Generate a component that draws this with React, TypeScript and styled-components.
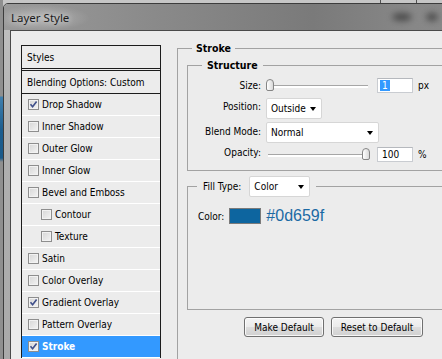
import React from "react";
import styled, { createGlobalStyle } from "styled-components";

const UI_FONT = `"DejaVu Sans Condensed", "Liberation Sans", Arial, sans-serif`;

const GlobalStyle = createGlobalStyle`
  html, body { margin: 0; padding: 0; width: 442px; height: 359px; overflow: hidden; }
  body { background: #c4c4c4; font-family: ${UI_FONT}; font-size: 10px; line-height: 13px; color: #000; }
  #root { width: 442px; height: 359px; }
`;

const Desktop = styled.div`
  width: 442px;
  height: 359px;
  overflow: hidden;
  box-sizing: border-box;
  padding: 3px 0 0 3px;
  background:
    linear-gradient(90deg, transparent 380px, #505050 380px, #505050 381px, transparent 381px, transparent 416px, #505050 416px, #505050 417px, transparent 417px) left top / 100% 3px no-repeat,
    linear-gradient(180deg, #8f8f8f 0, #8f8f8f 96px, #3f7fae 97px, #1b5d8f 130px, #1a5a8a 158px, #8f8f8f 162px, #8f8f8f 100%) left top / 3px 100% no-repeat,
    #c6c6c6;
`;

const Window = styled.div`
  width: 500px;
  height: 420px;
  box-sizing: border-box;
  border: 1px solid #3c3c3c;
  border-radius: 5px 5px 0 0;
  background: linear-gradient(180deg, #c2c2c2 0, #b0b0b0 120px, #a8a8a8 100%);
  display: flex;
  flex-direction: column;
  padding: 0 6px;
`;

const TitleBar = styled.div`
  height: 26px;
  margin: 0 -6px;
  padding-left: 7px;
  display: flex;
  align-items: center;
  border-radius: 4px 4px 0 0;
  background:
    radial-gradient(ellipse 48px 13px at 38px 14px, rgba(255, 255, 255, 0.3), rgba(255, 255, 255, 0) 100%),
    linear-gradient(90deg, #9a9a9a 0, #8a8a8a 30%, #7a7a7a 62%, #878787 82%, #8a8a8a 100%);
`;

const Title = styled.span`
  flex: 0 0 381px;
  font-family: "Noto Sans", "Liberation Sans", sans-serif;
  font-size: 11.5px;
  color: #1c1c1c;
  text-shadow: 0 0 6px rgba(255, 255, 255, 0.8);
`;

const Blob = styled.span<{ $w: number }>`
  width: ${(p) => p.$w}px;
  height: 8px;
  border-radius: 50%;
  background: #3d3d3d;
  filter: blur(3px);
  opacity: 0.8;
  margin-right: 14px;
`;

const Client = styled.div`
  flex: 1;
  border: 1px solid #4a4a4a;
  border-bottom: none;
  background: #ececec;
  display: flex;
  align-items: flex-start;
  padding-left: 10px;
`;

const StyleList = styled.div`
  width: 140px;
  flex: none;
  box-sizing: border-box;
  margin-top: 14px;
  border: 1px solid #1c1c1c;
  border-bottom: none;
`;

const ListHeader = styled.div`
  height: 22px;
  display: flex;
  align-items: center;
  padding-left: 5px;
  border-bottom: 3px double #1c1c1c;
`;

const BlendRow = styled.div`
  height: 22px;
  display: flex;
  align-items: center;
  padding-left: 5px;
  border-bottom: 1px solid #1c1c1c;
`;

const StyleRow = styled.div<{ $indent?: boolean; $selected?: boolean }>`
  height: 21px;
  border-bottom: 1px solid #ffffff;
  display: flex;
  align-items: center;
  gap: 3px;
  padding-left: ${(p) => (p.$indent ? 19 : 6)}px;
  background: ${(p) => (p.$selected ? "#3399ff" : "transparent")};
  color: ${(p) => (p.$selected ? "#ffffff" : "#000000")};
  font-weight: ${(p) => (p.$selected ? 700 : 400)};
`;

const CheckBox = styled.span`
  width: 11px;
  height: 11px;
  flex: none;
  box-sizing: border-box;
  border: 1px solid #8e8e8e;
  background: linear-gradient(135deg, #d6d6d6, #f4f4f4);
  box-shadow: inset 0 0 0 1px #f2f2f2;
  display: flex;
  align-items: center;
  justify-content: center;
`;

const RightColumn = styled.div`
  width: 300px;
  flex: none;
  margin-left: 16px;
  margin-top: 11px;
`;

const Group = styled.fieldset<{ $padLeft?: number }>`
  margin: 0;
  min-width: 0;
  padding: 0 0 0 ${(p) => p.$padLeft ?? 0}px;
  border: 1px solid #a2a2a2;
`;

const StrokeGroup = styled(Group)`
  border-bottom: none;
  padding-bottom: 40px;
`;

const InnerGroup = styled(Group)<{ $top: number }>`
  margin-top: ${(p) => p.$top}px;
`;

const Legend = styled.legend<{ $offset: number; $pad: number }>`
  margin-left: ${(p) => p.$offset}px;
  padding: 0 ${(p) => p.$pad}px;
  font-weight: 700;
  font-size: 10.5px;
  line-height: 13px;
`;

const FillLegend = styled.legend`
  margin-left: 9px;
  padding: 0 6px;
  display: flex;
  align-items: center;
  gap: 8px;
`;

const FieldGrid = styled.div`
  display: grid;
  grid-template-columns: 73px auto;
  column-gap: 5px;
  align-items: center;
  padding: 6px 0 8px;
`;

const Label = styled.span`
  text-align: right;
`;

const Controls = styled.div<{ $gapTop?: number }>`
  display: flex;
  align-items: center;
  margin-top: ${(p) => p.$gapTop ?? 0}px;
`;

const Slider = styled.div`
  position: relative;
  width: 104px;
  height: 15px;
  flex: none;
  margin-right: 7px;
`;

const Track = styled.div`
  position: absolute;
  left: 2px;
  right: 2px;
  top: 7px;
  height: 2px;
  background: #ffffff;
  border-top: 1px solid #a6a6a6;
`;

const Thumb = styled.div<{ $pos: number }>`
  position: absolute;
  top: 1px;
  left: ${(p) => p.$pos * 96}px;
  width: 8px;
  height: 12px;
  box-sizing: border-box;
  border: 1px solid #858585;
  border-radius: 4px 4px 2px 2px;
  background: linear-gradient(90deg, #ffffff, #d9d9d9);
`;

const NumField = styled.div`
  width: 36px;
  height: 15px;
  box-sizing: border-box;
  border: 1px solid #c9ccd1;
  border-top-color: #b5b8bd;
  background: #ffffff;
  display: flex;
  align-items: center;
  padding-left: 2px;
  margin-right: 5px;
`;

const FieldText = styled.span<{ $selected?: boolean }>`
  padding: 0 2px;
  line-height: 11px;
  background: ${(p) => (p.$selected ? "#3399ff" : "transparent")};
  color: ${(p) => (p.$selected ? "#ffffff" : "#000000")};
`;

const Select = styled.div<{ $w: number }>`
  width: ${(p) => p.$w}px;
  height: 21px;
  box-sizing: border-box;
  border: 1px solid #d6d6d6;
  border-radius: 2px;
  background: #ffffff;
  display: flex;
  align-items: center;
  justify-content: space-between;
  padding: 0 5px 0 4px;
  font-weight: 400;
`;

const Arrow = styled.span`
  width: 0;
  height: 0;
  border-left: 3.5px solid transparent;
  border-right: 3.5px solid transparent;
  border-top: 4px solid #000000;
`;

const ColorRow = styled.div`
  display: flex;
  align-items: center;
  padding: 10px 0 84px 10px;
`;

const Swatch = styled.span<{ $color: string }>`
  width: 32px;
  height: 16px;
  box-sizing: border-box;
  border: 1px solid #7a7a7a;
  background: ${(p) => p.$color};
  margin: 0 5px 0 5px;
`;

const HexText = styled.span`
  font-family: "Liberation Sans", Arial, sans-serif;
  font-size: 16px;
  line-height: 18px;
  color: #1b6aa4;
`;

const ButtonRow = styled.div`
  display: flex;
  gap: 7px;
  margin-top: 7px;
  padding-left: 57px;
`;

const Button = styled.button<{ $w: number }>`
  width: ${(p) => p.$w}px;
  height: 20px;
  box-sizing: border-box;
  border: 1px solid #707070;
  border-radius: 3px;
  background: linear-gradient(180deg, #f4f4f4 0, #ebebeb 50%, #dddddd 51%, #d0d0d0 100%);
  box-shadow: inset 0 0 0 1px rgba(255, 255, 255, 0.8);
  font-family: ${UI_FONT};
  font-size: 10px;
  color: #000;
  padding: 0;
`;

const Check = () => (
  <svg width="9" height="9" viewBox="0 0 9 9">
    <path d="M1.5 4.2 L3.6 6.8 L7.6 1.4" fill="none" stroke="#3f4f8a" strokeWidth="1.6" />
  </svg>
);

type Item = { label: string; checked?: boolean; indent?: boolean; selected?: boolean };

const items: Item[] = [
  { label: "Drop Shadow", checked: true },
  { label: "Inner Shadow" },
  { label: "Outer Glow" },
  { label: "Inner Glow" },
  { label: "Bevel and Emboss" },
  { label: "Contour", indent: true },
  { label: "Texture", indent: true },
  { label: "Satin" },
  { label: "Color Overlay" },
  { label: "Gradient Overlay", checked: true },
  { label: "Pattern Overlay" },
  { label: "Stroke", checked: true, selected: true },
];

export default function App() {
  return (
    <>
      <GlobalStyle />
      <Desktop>
        <Window>
          <TitleBar>
            <Title>Layer Style</Title>
            <Blob $w={20} />
            <Blob $w={12} />
          </TitleBar>
          <Client>
            <StyleList>
              <ListHeader>Styles</ListHeader>
              <BlendRow>Blending Options: Custom</BlendRow>
              {items.map((it) => (
                <StyleRow key={it.label} $indent={it.indent} $selected={it.selected}>
                  <CheckBox>{it.checked && <Check />}</CheckBox>
                  {it.label}
                </StyleRow>
              ))}
            </StyleList>
            <RightColumn>
              <StrokeGroup $padLeft={9}>
                <Legend $offset={5} $pad={4}>Stroke</Legend>
                <InnerGroup $top={4}>
                  <Legend $offset={14} $pad={5}>Structure</Legend>
                  <FieldGrid>
                    <Label>Size:</Label>
                    <Controls>
                      <Slider>
                        <Track />
                        <Thumb $pos={0} />
                      </Slider>
                      <NumField>
                        <FieldText $selected>1</FieldText>
                      </NumField>
                      px
                    </Controls>
                    <Label>Position:</Label>
                    <Controls $gapTop={5}>
                      <Select $w={56}>
                        Outside
                        <Arrow />
                      </Select>
                    </Controls>
                    <Label>Blend Mode:</Label>
                    <Controls $gapTop={3}>
                      <Select $w={113}>
                        Normal
                        <Arrow />
                      </Select>
                    </Controls>
                    <Label>Opacity:</Label>
                    <Controls $gapTop={4}>
                      <Slider>
                        <Track />
                        <Thumb $pos={1} />
                      </Slider>
                      <NumField>
                        <FieldText>100</FieldText>
                      </NumField>
                      %
                    </Controls>
                  </FieldGrid>
                </InnerGroup>
                <InnerGroup $top={5}>
                  <FillLegend>
                    Fill Type:
                    <Select $w={61}>
                      Color
                      <Arrow />
                    </Select>
                  </FillLegend>
                  <ColorRow>
                    Color:
                    <Swatch $color="#0d659f" />
                    <HexText>#0d659f</HexText>
                  </ColorRow>
                </InnerGroup>
                <ButtonRow>
                  <Button $w={80}>Make Default</Button>
                  <Button $w={92}>Reset to Default</Button>
                </ButtonRow>
              </StrokeGroup>
            </RightColumn>
          </Client>
        </Window>
      </Desktop>
    </>
  );
}
